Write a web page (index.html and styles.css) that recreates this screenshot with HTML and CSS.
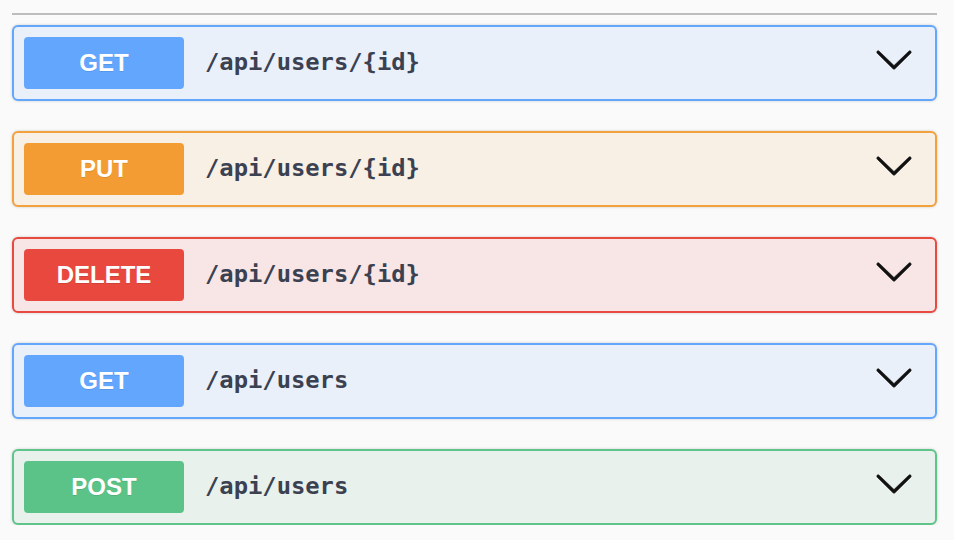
FILE: index.html
```html
<!DOCTYPE html>
<html>
<head>
<meta charset="utf-8">
<link rel="stylesheet" href="styles.css">
</head>
<body>
<div class="wrap">
  <div class="rule"></div>
  <div class="list">
    <div class="op op-get">
      <span class="method">GET</span>
      <span class="path">/api/users/{id}</span>
      <svg class="arrow" viewBox="0 0 20 20" width="40" height="40"><path d="M17.418 6.109c.272-.268.709-.268.979 0s.271.701 0 .969l-7.908 7.83c-.27.268-.707.268-.979 0l-7.908-7.83c-.27-.268-.27-.701 0-.969.271-.268.709-.268.979 0L10 13.25l7.418-7.141z"/></svg>
    </div>
    <div class="op op-put">
      <span class="method">PUT</span>
      <span class="path">/api/users/{id}</span>
      <svg class="arrow" viewBox="0 0 20 20" width="40" height="40"><path d="M17.418 6.109c.272-.268.709-.268.979 0s.271.701 0 .969l-7.908 7.83c-.27.268-.707.268-.979 0l-7.908-7.83c-.27-.268-.27-.701 0-.969.271-.268.709-.268.979 0L10 13.25l7.418-7.141z"/></svg>
    </div>
    <div class="op op-delete">
      <span class="method">DELETE</span>
      <span class="path">/api/users/{id}</span>
      <svg class="arrow" viewBox="0 0 20 20" width="40" height="40"><path d="M17.418 6.109c.272-.268.709-.268.979 0s.271.701 0 .969l-7.908 7.83c-.27.268-.707.268-.979 0l-7.908-7.83c-.27-.268-.27-.701 0-.969.271-.268.709-.268.979 0L10 13.25l7.418-7.141z"/></svg>
    </div>
    <div class="op op-get">
      <span class="method">GET</span>
      <span class="path">/api/users</span>
      <svg class="arrow" viewBox="0 0 20 20" width="40" height="40"><path d="M17.418 6.109c.272-.268.709-.268.979 0s.271.701 0 .969l-7.908 7.83c-.27.268-.707.268-.979 0l-7.908-7.83c-.27-.268-.27-.701 0-.969.271-.268.709-.268.979 0L10 13.25l7.418-7.141z"/></svg>
    </div>
    <div class="op op-post">
      <span class="method">POST</span>
      <span class="path">/api/users</span>
      <svg class="arrow" viewBox="0 0 20 20" width="40" height="40"><path d="M17.418 6.109c.272-.268.709-.268.979 0s.271.701 0 .969l-7.908 7.83c-.27.268-.707.268-.979 0l-7.908-7.83c-.27-.268-.27-.701 0-.969.271-.268.709-.268.979 0L10 13.25l7.418-7.141z"/></svg>
    </div>
  </div>
</div>
</body>
</html>
```

FILE: styles.css
```css
html, body {
  margin: 0;
  padding: 0;
  background: #fafafa;
}
.wrap {
  width: 925px;
  margin-left: 12px;
  padding-top: 13px;
}
.rule {
  height: 2px;
  background: #bdbdbd;
  margin-bottom: 10px;
}
.list {
  display: flex;
  flex-direction: column;
  gap: 30px;
}
.op {
  box-sizing: border-box;
  height: 76px;
  display: flex;
  align-items: center;
  padding: 0 21px 0 10px;
  border: 2px solid;
  border-radius: 6px;
  box-shadow: 0 0 3px rgba(0, 0, 0, 0.19);
}
.method {
  width: 160px;
  height: 52px;
  border-radius: 4px;
  display: flex;
  align-items: center;
  justify-content: center;
  color: #fff;
  font-family: "Liberation Sans", Arial, sans-serif;
  font-weight: 700;
  font-size: 24px;
  text-shadow: 0 1px 0 rgba(0, 0, 0, 0.1);
}
.path {
  flex: 1;
  margin-left: 21px;
  font-family: "DejaVu Sans Mono", "Liberation Mono", monospace;
  font-weight: 700;
  font-size: 23.8px;
  color: #3b4151;
  padding-bottom: 2px;
}
.arrow {
  flex: none;
  margin-bottom: 8px;
}
.arrow path {
  fill: #111;
  stroke: #111;
  stroke-width: 0.3;
}
.op-get { background: #e9f0fa; border-color: #63a7fc; }
.op-get .method { background: #62a6fe; }
.op-put { background: #f8efe5; border-color: #f3a13c; }
.op-put .method { background: #f39c33; }
.op-delete { background: #f7e6e5; border-color: #e84a3f; }
.op-delete .method { background: #e8483d; }
.op-post { background: #e8f1ec; border-color: #5ec48a; }
.op-post .method { background: #5bc387; }
```
